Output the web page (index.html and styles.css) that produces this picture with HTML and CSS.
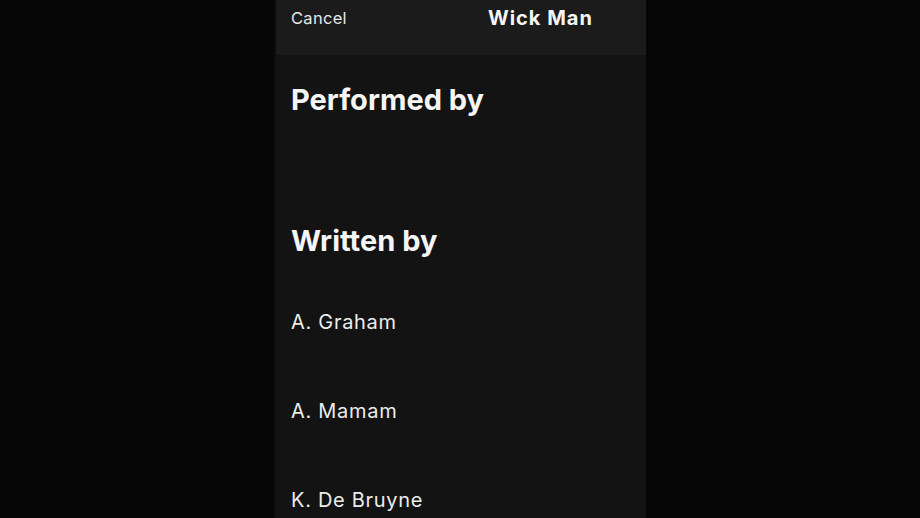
FILE: index.html
```html
<!DOCTYPE html>
<html>
<head>
<meta charset="utf-8">
<link rel="stylesheet" href="styles.css">
</head>
<body>
<div class="stage">
  <div class="phone">
    <div class="header">
      <span class="cancel">Cancel</span>
      <span class="title">Wick Man</span>
    </div>
    <div class="content">
      <h2 class="section performed">Performed by</h2>
      <h2 class="section written">Written by</h2>
      <ul class="names">
        <li>A. Graham</li>
        <li>A. Mamam</li>
        <li>K. De Bruyne</li>
      </ul>
    </div>
  </div>
</div>
</body>
</html>
```

FILE: styles.css
```css
html, body {
  margin: 0;
  padding: 0;
  background: #060606;
  height: 100%;
  overflow: hidden;
}
.stage {
  display: flex;
  justify-content: center;
  height: 518px;
  overflow: hidden;
}
.phone {
  width: 370px;
  background: #131313;
  display: flex;
  flex-direction: column;
  font-family: "Inter", "Lato", sans-serif;
  color: #f2f2f2;
  border-left: 2px solid #0c0c0c;
  overflow: hidden;
}
.header {
  height: 55px;
  flex-shrink: 0;
  background: #1b1b1b;
  display: flex;
  align-items: flex-start;
  padding: 0 0 0 15px;
  box-sizing: border-box;
}
.cancel {
  font-size: 16.5px;
  margin-top: 8px;
  color: #e8e8e8;
  letter-spacing: 0.3px;
}
.title {
  font-size: 20px;
  font-weight: 700;
  margin-top: 6px;
  margin-left: 141px;
  letter-spacing: 1px;
  color: #f5f5f5;
}
.content {
  padding-left: 15px;
}
.section {
  margin: 0;
  font-size: 29px;
  font-weight: 700;
  letter-spacing: 0;
  color: #f5f5f5;
}
.performed {
  margin-top: 27px;
}
.written {
  margin-top: 106px;
}
.names {
  list-style: none;
  margin: 52px 0 0;
  padding: 0;
}
.names li {
  font-size: 20px;
  letter-spacing: 0.7px;
  height: 89px;
  color: #ececec;
}
.names li:last-child {
  height: auto;
}
```
